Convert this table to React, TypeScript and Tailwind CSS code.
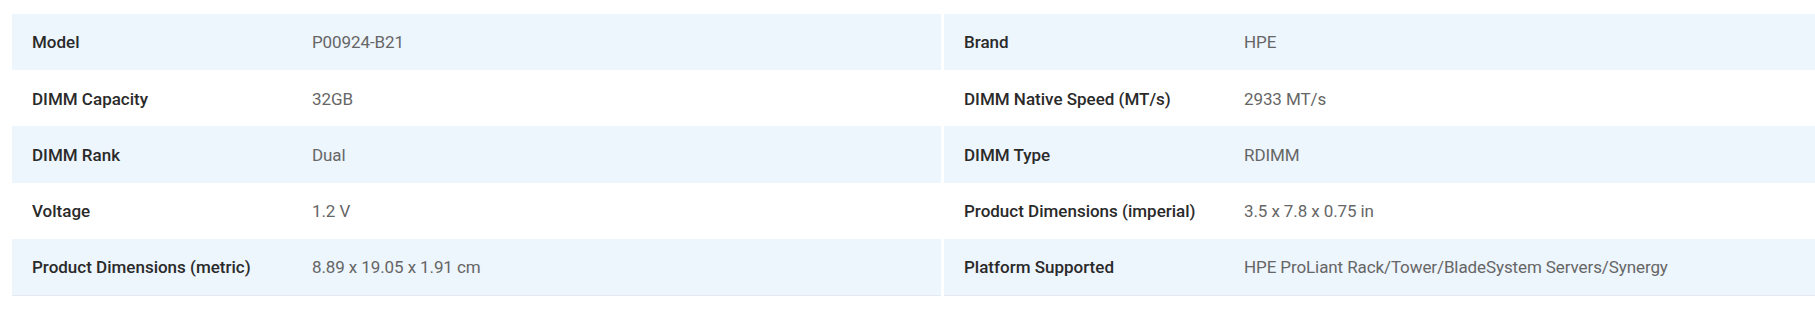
export default function App() {
  const left = [
    { label: "Model", value: "P00924-B21" },
    { label: "DIMM Capacity", value: "32GB" },
    { label: "DIMM Rank", value: "Dual" },
    { label: "Voltage", value: "1.2 V" },
    { label: "Product Dimensions (metric)", value: "8.89 x 19.05 x 1.91 cm" },
  ];
  const right = [
    { label: "Brand", value: "HPE" },
    { label: "DIMM Native Speed (MT/s)", value: "2933 MT/s" },
    { label: "DIMM Type", value: "RDIMM" },
    { label: "Product Dimensions (imperial)", value: "3.5 x 7.8 x 0.75 in" },
    { label: "Platform Supported", value: "HPE ProLiant Rack/Tower/BladeSystem Servers/Synergy" },
  ];

  const Column = ({ rows }: { rows: { label: string; value: string }[] }) => (
    <div className="border-b border-[#e6eaee]">
      {rows.map((row, i) => (
        <div
          key={row.label}
          className={`flex h-[56.2px] items-center pt-[2px] ${i % 2 === 0 ? "bg-[#edf5fd]" : "bg-white"}`}
        >
          <div className="w-[300px] shrink-0 pl-5 text-[17px] font-medium text-[#2a2a2a]">
            {row.label}
          </div>
          <div className="text-[17px] font-normal tracking-[-0.1px] text-[#666]">{row.value}</div>
        </div>
      ))}
    </div>
  );

  return (
    <div className="h-[321px] w-full overflow-hidden bg-white font-['Roboto',sans-serif]">
      <div className="grid w-[1873px] grid-cols-[929px_929px] gap-x-[3px] px-3 pt-[14px]">
        <Column rows={left} />
        <Column rows={right} />
      </div>
    </div>
  );
}
